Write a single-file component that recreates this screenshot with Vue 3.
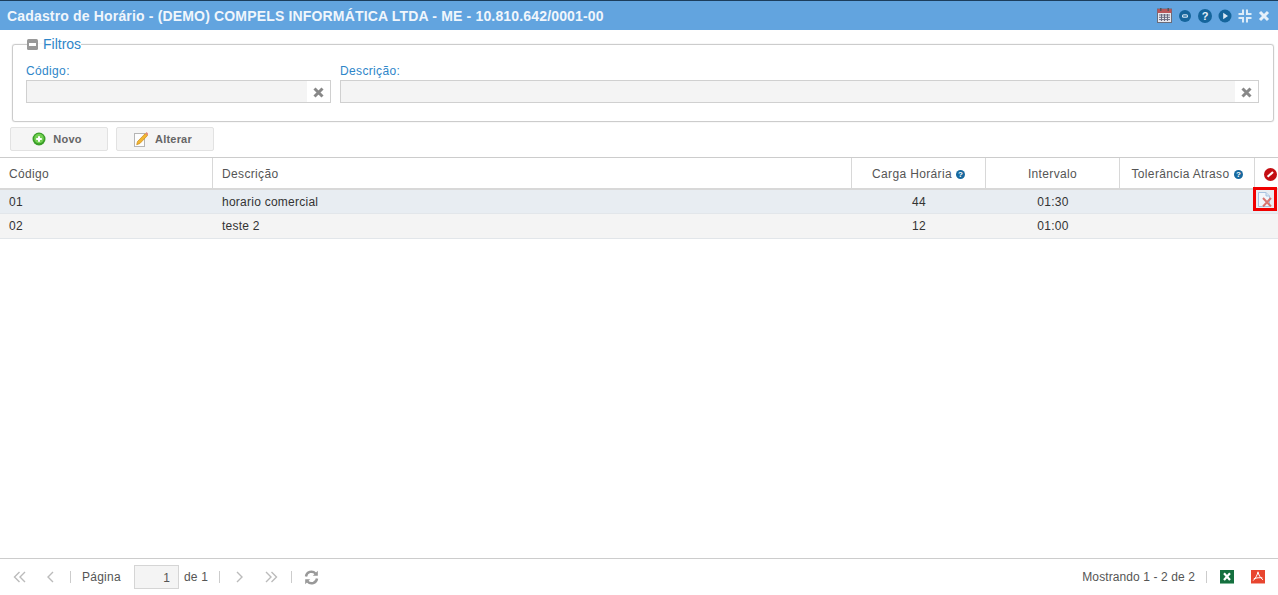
<script setup>
const rows = [
  { codigo: '01', descricao: 'horario comercial', carga: '44', intervalo: '01:30', selected: true },
  { codigo: '02', descricao: 'teste 2', carga: '12', intervalo: '01:00', selected: false }
]
</script>

<template>
  <div class="page">
    <header class="titlebar">
      <span class="title">Cadastro de Horário - (DEMO) COMPELS INFORMÁTICA LTDA - ME - 10.810.642/0001-00</span>
      <div class="title-icons">
        <svg width="15" height="15" viewBox="0 0 15 15">
          <rect x="0.5" y="1" width="14" height="13.5" fill="#e8e8ee" stroke="#6b6b78" />
          <rect x="0.5" y="1" width="14" height="4" fill="#b9565a" />
          <rect x="3" y="0" width="1.5" height="3" fill="#555" />
          <rect x="10.5" y="0" width="1.5" height="3" fill="#555" />
          <path d="M2 7h11M2 9.3h11M2 11.6h11M4.5 6v7M7.5 6v7M10.5 6v7" stroke="#6a6a80" stroke-width="1" />
        </svg>
        <svg width="14" height="14" viewBox="0 0 14 14">
          <circle cx="7" cy="7" r="6" fill="#15659c" />
          <rect x="4" y="5.2" width="6" height="3.6" rx="1.6" fill="#cfe3f2" />
          <rect x="5.2" y="6.4" width="3.6" height="1.2" fill="#15659c" />
        </svg>
        <svg width="14" height="14" viewBox="0 0 14 14">
          <circle cx="7" cy="7" r="7" fill="#15659c" />
          <text x="7" y="11.2" text-anchor="middle" class="q-big">?</text>
        </svg>
        <svg width="14" height="14" viewBox="0 0 14 14">
          <circle cx="7" cy="7" r="6.5" fill="#15659c" />
          <path d="M5.2 3.8 10 7l-4.8 3.2z" fill="#dbe9f4" />
        </svg>
        <svg width="14" height="14" viewBox="0 0 14 14">
          <path d="M5 0.5v4.500H0.5M9 0.5v4.500h4.500M5 13.500V9H0.5M9 13.500V9h4.500" fill="none" stroke="#dcebf8" stroke-width="2" />
        </svg>
        <svg width="12" height="12" viewBox="0 0 12 12">
          <path d="M2 2l8 8M10 2l-8 8" stroke="#e6f0fa" stroke-width="3" />
        </svg>
      </div>
    </header>

    <fieldset class="filters">
      <legend class="legend">
        <svg width="11" height="11" viewBox="0 0 11 11">
          <rect width="11" height="11" rx="1.500" fill="#999" />
          <rect x="2" y="4" width="7" height="3" fill="#fff" />
        </svg>
        <span>Filtros</span>
      </legend>
      <div class="filter-row">
        <div class="field field-code">
          <label>Código:</label>
          <div class="input">
            <div class="input-fill"></div>
            <div class="clear">
              <svg width="11" height="11" viewBox="0 0 11 11"><path d="M1.500 1.500l8 8M9.500 1.500l-8 8" stroke="#888" stroke-width="3" /></svg>
            </div>
          </div>
        </div>
        <div class="field field-desc">
          <label>Descrição:</label>
          <div class="input">
            <div class="input-fill"></div>
            <div class="clear">
              <svg width="11" height="11" viewBox="0 0 11 11"><path d="M1.500 1.500l8 8M9.500 1.500l-8 8" stroke="#888" stroke-width="3" /></svg>
            </div>
          </div>
        </div>
      </div>
    </fieldset>

    <div class="toolbar">
      <button class="btn">
        <svg width="14" height="14" viewBox="0 0 14 14">
          <circle cx="7" cy="7" r="6.500" fill="#3a9e28" />
          <circle cx="7" cy="6.500" r="4.800" fill="#72d052" />
          <path d="M7 4.200v5.600M4.200 7h5.600" stroke="#fff" stroke-width="2" />
        </svg>
        <span>Novo</span>
      </button>
      <button class="btn">
        <svg width="14" height="16" viewBox="0 0 14 16">
          <rect x="0.500" y="2.500" width="10" height="13" fill="#fdfdfd" stroke="#b5b5b5" />
          <path d="M3.500 10.500l-.8 3.200 3.200-1.200L13.500 4.500 11.300 2.500z" fill="#f2b632" stroke="#c98a1a" stroke-width=".7" />
          <path d="M11.300 2.500l1.300-1.500 1.900 2-1 1.500z" fill="#e58a7a" />
        </svg>
        <span>Alterar</span>
      </button>
    </div>

    <section class="grid">
      <div class="row head">
        <div class="cell">Código</div>
        <div class="cell">Descrição</div>
        <div class="cell center">Carga Horária
          <svg class="help" width="9" height="9" viewBox="0 0 9 9"><circle cx="4.500" cy="4.500" r="4.500" fill="#17699f" /><text x="4.500" y="7.400" text-anchor="middle" class="q-small">?</text></svg>
        </div>
        <div class="cell center">Intervalo</div>
        <div class="cell center">Tolerância Atraso
          <svg class="help" width="9" height="9" viewBox="0 0 9 9"><circle cx="4.500" cy="4.500" r="4.500" fill="#17699f" /><text x="4.500" y="7.400" text-anchor="middle" class="q-small">?</text></svg>
        </div>
        <div class="cell icon-cell">
          <svg class="no-icon" width="13" height="13" viewBox="0 0 13 13">
            <circle cx="6.500" cy="6.500" r="6.500" fill="#c40d12" />
            <path d="M3.600 8.800 9 4" stroke="#fff" stroke-width="2.200" />
          </svg>
        </div>
      </div>
      <div v-for="r in rows" :key="r.codigo" class="row body" :class="{ selected: r.selected }">
        <div class="cell">{{ r.codigo }}</div>
        <div class="cell">{{ r.descricao }}</div>
        <div class="cell center">{{ r.carga }}</div>
        <div class="cell center">{{ r.intervalo }}</div>
        <div class="cell center"></div>
        <div class="cell icon-cell">
          <span v-if="r.selected" class="marked">
            <svg width="14" height="15" viewBox="0 0 14 15">
              <path d="M.5.500h7.500l3.500 3.500v10.500H.5z" fill="#f2f6fb" stroke="#a9c3e0" />
              <path d="M8 .5V4h3.500" fill="#d7e4f2" stroke="#a9c3e0" />
              <path d="M5 6l8 8.500M13 6l-8 8.500" stroke="#d9746f" stroke-width="2" />
            </svg>
          </span>
        </div>
      </div>
    </section>

    <footer class="pager">
      <div class="pager-left">
        <span class="pg-btn first"><svg width="14" height="12" viewBox="0 0 14 12"><path d="M6.500 1 1.500 6l5 5M12 1 7 6l5 5" fill="none" stroke="#bbb" stroke-width="1.400" /></svg></span>
        <span class="pg-btn prev"><svg width="9" height="12" viewBox="0 0 9 12"><path d="M7 1 2 6l5 5" fill="none" stroke="#bbb" stroke-width="1.400" /></svg></span>
        <span class="sep"></span>
        <span class="pg-label">Página</span>
        <span class="pg-input">1</span>
        <span class="pg-of">de 1</span>
        <span class="sep"></span>
        <span class="pg-btn next"><svg width="9" height="12" viewBox="0 0 9 12"><path d="M2 1l5 5-5 5" fill="none" stroke="#bbb" stroke-width="1.400" /></svg></span>
        <span class="pg-btn last"><svg width="14" height="12" viewBox="0 0 14 12"><path d="M2 1l5 5-5 5M7.500 1l5 5-5 5" fill="none" stroke="#bbb" stroke-width="1.400" /></svg></span>
        <span class="sep"></span>
        <span class="pg-btn refresh">
          <svg width="15" height="15" viewBox="0 0 15 15">
            <path d="M2 6.500A5.500 5.500 0 0 1 11.500 3.500" fill="none" stroke="#999" stroke-width="2.400" />
            <path d="M13.800 .8v5h-5z" fill="#999" />
            <path d="M13 8.500A5.500 5.500 0 0 1 3.500 11.500" fill="none" stroke="#999" stroke-width="2.400" />
            <path d="M1.200 14.200v-5h5z" fill="#999" />
          </svg>
        </span>
      </div>
      <div class="pager-right">
        <span class="showing">Mostrando 1 - 2 de 2</span>
        <span class="sep"></span>
        <svg class="xls" width="14" height="14" viewBox="0 0 14 14">
          <rect width="14" height="13" fill="#15703f" />
          <rect y="13" width="14" height="1" fill="#7fb898" />
          <path d="M4 3.200l6 6.800M10 3.200 4 10" stroke="#fff" stroke-width="2.200" />
        </svg>
        <svg class="pdf" width="14" height="14" viewBox="0 0 14 14">
          <rect width="14" height="13" fill="#e8452f" />
          <rect y="13" width="14" height="1" fill="#f2a79c" />
          <path d="M7 1.800c-.6 2.800-2.200 6.400-4.800 8.800M7 1.800c.5 3 2.300 6 5 8M2.800 8.700c3-1 6-1.200 8.600-.8" fill="none" stroke="#fff" stroke-width="1" />
        </svg>
      </div>
    </footer>
  </div>
</template>

<style>
html, body { margin: 0; background: #fff; }
</style>

<style scoped>
.page {
  width: 1278px;
  height: 595px;
  display: flex;
  flex-direction: column;
  overflow: hidden;
  font-family: "Liberation Sans", Arial, sans-serif;
  color: #444;
  background: #fff;
}
.titlebar {
  box-sizing: border-box;
  height: 30px;
  border-top: 1px solid #1c3d5c;
  background: #62a4df;
  display: flex;
  align-items: center;
  justify-content: space-between;
  padding: 0 8px 0 7px;
  flex: none;
}
.title {
  color: #f0f6fc;
  font-size: 14px;
  font-weight: bold;
  letter-spacing: .165px;
}
.title-icons {
  display: flex;
  align-items: center;
  gap: 6px;
}
.q-big {
  font: bold 11px "Liberation Sans", sans-serif;
  fill: #e4eff8;
}
.q-small {
  font: bold 8px "Liberation Sans", sans-serif;
  fill: #fff;
}
.filters {
  box-sizing: border-box;
  margin: 8px 4px 0 12px;
  padding: 14px 14px 0 13px;
  height: 84px;
  border: 1px solid #ccc;
  border-radius: 3px;
  box-shadow: 0 0 1px #bbb;
  min-width: 0;
  flex: none;
}
.legend {
  padding: 0;
  margin-left: 1px;
  font-size: 14px;
  line-height: 12px;
  color: #2e86c9;
  display: flex;
  align-items: center;
  gap: 5px;
}
.filter-row {
  display: flex;
  gap: 9px;
}
.field-code { width: 305px; flex: none; }
.field-desc { flex: 1; }
.field label {
  display: block;
  font-size: 12px;
  line-height: 14px;
  color: #2e86c9;
  margin-bottom: 2px;
  letter-spacing: .35px;
}
.input {
  box-sizing: border-box;
  height: 23px;
  border: 1px solid #d0d0d0;
  display: flex;
  background: #fff;
}
.input-fill { flex: 1; background: #f4f4f4; }
.clear {
  width: 23px;
  display: flex;
  align-items: center;
  justify-content: center;
  padding-top: 1px;
}
.toolbar {
  display: flex;
  gap: 8px;
  margin: 5px 0 0 10px;
  flex: none;
}
.btn {
  box-sizing: border-box;
  width: 98px;
  height: 24px;
  border: 1px solid #e2e2e2;
  border-radius: 2px;
  background: #f5f5f5;
  display: flex;
  align-items: center;
  justify-content: center;
  gap: 7px;
  padding: 0 4px 0 0;
  font: bold 11px "Liberation Sans", sans-serif;
  color: #666;
  letter-spacing: .2px;
}
.grid {
  margin-top: 6px;
  border-top: 1px solid #ccc;
  flex: 1;
}
.row {
  display: grid;
  grid-template-columns: 213px 639px 134px 134px 135px 23px;
}
.cell {
  box-sizing: border-box;
  display: flex;
  align-items: center;
  padding-left: 9px;
  font-size: 12px;
  min-width: 0;
  white-space: nowrap;
}
.center {
  justify-content: center;
  padding-left: 0;
  gap: 4px;
}
.head {
  height: 32px;
  border-bottom: 2px solid #d8d8d8;
  box-sizing: border-box;
}
.head .cell {
  border-right: 1px solid #d8d8d8;
  color: #555;
  padding-top: 2px;
  letter-spacing: .35px;
}
.head .cell:last-child {
  border-right: 0;
}
.icon-cell {
  padding: 0;
  justify-content: center;
  position: relative;
}
.head .no-icon { margin-left: 8px; }
.body {
  height: 24px;
  box-sizing: border-box;
  border-bottom: 1px solid #e2e6ea;
  background: #f4f4f4;
  color: #333;
}
.body .cell { letter-spacing: .25px; }
.body + .body { height: 25px; }
.body.selected { background: #e8edf2; }
.marked {
  box-sizing: border-box;
  width: 24px;
  height: 24px;
  border: 3px solid #f00000;
  display: flex;
  align-items: center;
  justify-content: center;
  position: absolute;
  left: -2px;
  top: -3px;
}
.pager {
  box-sizing: border-box;
  height: 37px;
  border-top: 1px solid #ccc;
  display: flex;
  align-items: center;
  justify-content: space-between;
  padding: 0 13px;
  font-size: 12px;
  color: #555;
  flex: none;
}
.pager-left, .pager-right {
  display: flex;
  align-items: center;
}
.pg-btn { display: flex; align-items: center; }
.first { margin-right: 19px; }
.prev { margin-right: 15px; }
.sep {
  width: 1px;
  height: 12px;
  background: #ccc;
}
.pg-label { margin: 0 13px 0 11px; letter-spacing: .25px; }
.pg-input {
  box-sizing: border-box;
  width: 45px;
  height: 24px;
  border: 1px solid #d5d5d5;
  background: #f4f4f4;
  text-align: right;
  padding-right: 8px;
  line-height: 24px;
  margin-right: 5px;
}
.pg-of { margin-right: 11px; letter-spacing: .2px; }
.next { margin: 0 20px 0 15px; }
.last { margin-right: 13px; }
.refresh { margin-left: 12px; }
.showing { letter-spacing: .1px; }
.pager-right .sep { margin: 0 13px 0 11px; }
.pdf { margin-left: 17px; }
.help { flex: none; }
</style>
